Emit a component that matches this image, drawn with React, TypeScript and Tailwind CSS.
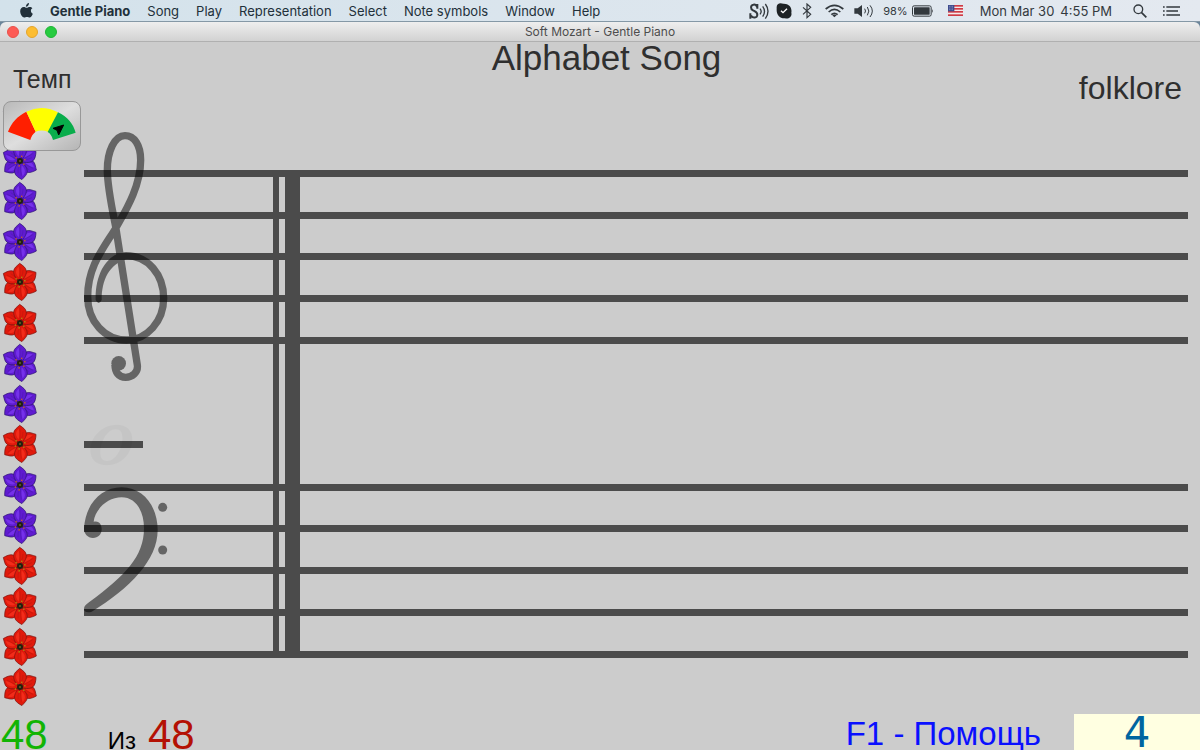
import type { ReactNode } from "react";

const menus = ["Song", "Play", "Representation", "Select", "Note symbols", "Window", "Help"];

function AppleIcon() {
  return (
    <svg viewBox="0 0 24 28" className="h-[15px] w-[13px]" fill="currentColor" aria-hidden="true">
      <path d="M16.6 0c.2 2-.6 3.700-1.700 5-1.100 1.200-2.600 2-4 1.900-.2-1.900.7-3.600 1.700-4.800C13.700.9 15.300.1 16.600 0z" />
      <path d="M23 9.800c-1.800 1.100-2.800 2.700-2.800 4.800 0 2.500 1.400 4.400 3.600 5.300-.7 2.400-2.900 6.800-5.500 7.300-1.800.2-2.900-1.200-5.300-1.200s-3.600 1.200-5.300 1.200C4.200 27.200.2 20.800.2 15.600c0-5 3-8 6.700-8 2.200 0 4 1.400 5.400 1.400 1.300 0 3.300-1.500 5.900-1.400 2 0 3.700.8 4.800 2.200z" />
    </svg>
  );
}

function SpeechIcon() {
  return (
    <svg viewBox="0 0 63 54" className="h-[18px] w-[21px]" fill="none" stroke="currentColor" aria-hidden="true">
      <path d="M25 20V6M25 16C22 9 17 7 13 8C4 10 4 21 12 25C19 29 26 31 25 39C24 48 12 50 6 41M4 34v16" strokeWidth="6" />
      <path d="M33 20q7 9 0 17M41 13q11 15 0 31M49 6q16 21 0 44" strokeWidth="4" />
    </svg>
  );
}

function SkypeIcon() {
  return (
    <svg viewBox="0 0 48 48" className="size-4" aria-hidden="true">
      <path d="M14 1C7 1 1 7 2 14c0 2 0 3 0 5-1 16 9 28 25 27 12 3 22-5 19-17C49 13 38 1 22 2c-3 0-5-1-8-1z" fill="#1d2225" />
      <path d="M15 23l6 6 12-12" fill="none" stroke="#fff" strokeWidth="4" />
    </svg>
  );
}

function BluetoothIcon() {
  return (
    <svg viewBox="0 0 30 48" className="h-4 w-[10px]" fill="none" stroke="currentColor" strokeWidth="3.500" aria-hidden="true">
      <path d="M3 13l23 21-11 10V3l11 10L3 34" />
    </svg>
  );
}

function WifiIcon() {
  return (
    <svg viewBox="0 0 57 42" className="h-[14px] w-[19px]" fill="none" stroke="currentColor" strokeWidth="5" aria-hidden="true">
      <path d="M2 15Q28-7 55 15M11 24Q28 8 46 24M19 32Q28 24 38 32" />
      <path d="M28 40l-6-6q6-5 13 0z" fill="currentColor" stroke="none" />
    </svg>
  );
}

function VolumeIcon() {
  return (
    <svg viewBox="0 0 60 42" className="h-[14px] w-5" fill="none" stroke="currentColor" strokeWidth="3" aria-hidden="true">
      <path d="M1 13h10L24 3v36L11 29H1z" fill="currentColor" stroke="none" />
      <path d="M32 14q5 7 0 14M40 9q9 12 0 25M48 4q14 17 0 35" />
    </svg>
  );
}

function BatteryIcon() {
  return (
    <svg viewBox="0 0 66 36" className="h-3 w-[22px]" aria-hidden="true">
      <rect x="1.500" y="2.500" width="56" height="31" rx="5" fill="none" stroke="currentColor" strokeWidth="3" />
      <rect x="6" y="7" width="47" height="22" rx="1" fill="currentColor" />
      <path d="M60 12q5 6 0 12z" fill="currentColor" />
    </svg>
  );
}

function FlagIcon() {
  return (
    <svg viewBox="0 0 45 33" className="h-[11px] w-[15px]" role="img" aria-label="U.S. keyboard">
      <rect width="45" height="33" fill="#f4e9ea" />
      {[0, 9, 18, 28].map((y) => (
        <rect key={y} y={y} width="45" height="5" fill="#cf3b45" />
      ))}
      <rect width="19" height="19" fill="#3d4b8e" />
      {[4, 9, 14].map((y) => (
        <path key={y} d={`M3 ${y}h14`} stroke="#c5cae6" strokeWidth="2" strokeDasharray="2 3" />
      ))}
    </svg>
  );
}

function SearchIcon() {
  return (
    <svg viewBox="0 0 42 42" className="size-[14px]" fill="none" stroke="currentColor" aria-hidden="true">
      <circle cx="16" cy="16" r="13" strokeWidth="4" />
      <path d="M25 25l15 15" strokeWidth="5" />
    </svg>
  );
}

function ListIcon() {
  return (
    <svg viewBox="0 0 51 30" className="h-[10px] w-[17px]" stroke="currentColor" strokeWidth="5" aria-hidden="true">
      <path d="M0 3h5M10 3h41M0 15h5M10 15h35M0 27h5M10 27h41" />
    </svg>
  );
}

function StatusButton({ label, className, children }: { label: string; className: string; children: ReactNode }) {
  return (
    <button type="button" aria-label={label} className={`flex shrink-0 items-center ${className}`}>
      {children}
    </button>
  );
}

function MenuBar() {
  return (
    <nav className="flex h-[21px] items-center justify-between bg-linear-to-r from-[#d3e2eb] to-[#e4e9f0] px-5 text-[13px] leading-5 whitespace-nowrap text-[#22303a]">
      <div className="flex items-center gap-[17px]">
        <button type="button" aria-label="Apple menu">
          <AppleIcon />
        </button>
        <button type="button" className="font-bold">
          Gentle Piano
        </button>
        {menus.map((menu) => (
          <button type="button" key={menu}>
            {menu}
          </button>
        ))}
      </div>
      <div className="flex items-center text-[#33393e]">
        <StatusButton label="Speech" className="mr-[6px]"><SpeechIcon /></StatusButton>
        <StatusButton label="Skype" className="mr-[10px]"><SkypeIcon /></StatusButton>
        <StatusButton label="Bluetooth" className="mr-[13px]"><BluetoothIcon /></StatusButton>
        <StatusButton label="Wi-Fi" className="mr-[10px]"><WifiIcon /></StatusButton>
        <StatusButton label="Volume" className="mr-[9px]"><VolumeIcon /></StatusButton>
        <StatusButton label="Battery 98%" className="mr-[14px] gap-1 text-[11px]">
          98%
          <BatteryIcon />
        </StatusButton>
        <StatusButton label="Input source" className="mr-[17px]"><FlagIcon /></StatusButton>
        <StatusButton label="Date and time" className="mr-[21px] gap-[6px]">
          <span>Mon Mar 30</span>
          <span>4:55 PM</span>
        </StatusButton>
        <StatusButton label="Search" className="mr-4"><SearchIcon /></StatusButton>
        <StatusButton label="Notification Center" className=""><ListIcon /></StatusButton>
      </div>
    </nav>
  );
}

function TitleBar() {
  return (
    <div className="border-t border-[#8598a6] bg-[#6b8499]">
      <div className="grid h-5 grid-cols-[1fr_auto_1fr] items-center rounded-t-md border-b border-[#b0b0b0] bg-linear-to-b from-[#eeeeee] to-[#d2d2d2] px-[7px]">
        <div className="flex gap-[7px]">
          <button type="button" aria-label="Close" className="size-3 rounded-full border border-[#e9514a] bg-[#fd5b55]" />
          <button type="button" aria-label="Minimize" className="size-3 rounded-full border border-[#e5a52b] bg-[#fdbd31]" />
          <button type="button" aria-label="Zoom" className="size-3 rounded-full border border-[#1fb535] bg-[#27cb40]" />
        </div>
        <span className="text-[12px] leading-4 text-[#4d4d4d]">Soft Mozart - Gentle Piano</span>
      </div>
    </div>
  );
}

const petals = [120, 236, 60, 298, 175, 0];

function Flower({ tone }: { tone: "violet" | "red" }) {
  const violet = tone === "violet";
  const fill = violet ? "#5f1bd0" : "#e0190b";
  const light = violet ? "#7531ea" : "#f22c1a";
  const dark = violet ? "#2e1670" : "#7a1410";
  return (
    <svg viewBox="-60 -60 120 120" className="size-10" aria-hidden="true">
      {petals.map((angle) => (
        <g key={angle} transform={`rotate(${angle})`}>
          <path d="M0 0C-10-8-20-20-19-33C-18-43-9-48-1-56C8-50 18-43 19-33C20-20 10-8 0 0z" fill={fill} stroke={dark} strokeWidth="2" />
          <path d="M-4-14C-15-25-14-38-4-46C-1-36-1-24-4-14z" fill={light} />
          <path d="M0-8V-44M2-12Q10-24 9-36" fill="none" stroke={dark} strokeWidth="1.500" opacity=".4" />
        </g>
      ))}
      {[20, 75, 130, 190, 245, 310].map((angle) => (
        <g key={angle} transform={`rotate(${angle})`}>
          <path d="M0 0V-13" stroke={dark} strokeWidth="2" />
          <circle cy="-15" r="2.500" fill={violet ? "#c8602c" : "#b08a0e"} />
        </g>
      ))}
      <circle r="9" fill="#211f10" />
      <circle r="3" fill="#6d6a20" />
    </svg>
  );
}

const flowers: ("violet" | "red")[] = [
  "violet", "violet", "violet", "violet", "red", "red", "violet", "violet",
  "red", "violet", "violet", "red", "red", "red", "red",
];

function TempoGauge() {
  return (
    <svg viewBox="13 126 228 144" className="h-full w-full" aria-hidden="true">
      <path d="M25 215C35 188 54 168 80 155L108 215Q96 224 92 240z" fill="#ff1f00" />
      <path d="M80 155Q127 132 175 157L146 216Q127 208 108 215z" fill="#ffff00" />
      <path d="M175 157C203 170 221 192 228 218L160 240Q156 223 144 216z" fill="#09ad4c" />
      <path d="M192 195l-32 10 12 6 5 14z" fill="#000" stroke="#000" strokeWidth="3" />
    </svg>
  );
}

/* Offsets of the staff lines from the top of the score. */
const staffLines = [70, 112, 153, 195, 237, 384, 425, 467, 509, 551];

function Score() {
  return (
    <svg className="h-[607px] w-full" role="img" aria-label="Grand staff with treble and bass clefs">
      <g fill="#4b4b4b">
        {staffLines.map((y) => (
          <rect key={y} y={y} width="100%" height="7" />
        ))}
        <rect y="341" width="59" height="7" />
        <rect x="189" y="70" width="6" height="488" />
        <rect x="201" y="70" width="15" height="488" />
      </g>
      <svg x="-9" y="20" width="240" height="270" viewBox="0 0 720 810">
        <g opacity=".5">
          <path
            d="M152 407C220 407 266 465 266 535C266 605 215 660 155 660C90 660 38 605 38 530C38 440 85 385 122 325C150 275 197 200 197 120C197 75 178 47 150 47C118 47 97 95 97 150C97 200 112 270 122 320L187 735C190 757 172 772 152 772C130 772 120 755 120 735"
            fill="none"
            stroke="#000"
            strokeWidth="22"
          />
          <path d="M155 396C105 396 60 450 62 540Q71 558 80 540C80 480 103 432 155 418z" />
          <circle cx="131" cy="730" r="22" />
        </g>
      </svg>
      <svg x="-9" y="310" width="240" height="260" viewBox="0 0 720 780">
        <g opacity=".5">
          <path d="M27 355C32 280 80 232 140 232C205 232 248 290 248 360C248 450 165 535 50 605C38 609 27 606 27 597C27 589 32 584 42 577C150 498 207 440 207 355C207 300 180 262 140 262C98 262 60 298 56 335C74 331 80 345 80 358C80 373 69 384 54 384C38 384 27 372 27 355z" />
          <circle cx="263" cy="292" r="13.500" />
          <circle cx="263" cy="420" r="13.500" />
        </g>
        <path
          d="M46 120C46 80 82 44 125 44C155 44 172 60 172 88C172 130 140 166 96 166C65 166 46 150 46 120zM76 130C76 145 84 153 96 153C120 153 142 120 142 84C142 68 136 58 122 58C97 58 76 95 76 130z"
          fillRule="evenodd"
          opacity=".03"
        />
      </svg>
    </svg>
  );
}

export default function App() {
  return (
    <div className="flex min-h-screen flex-col overflow-hidden bg-[#cccccc] font-['Inter','Noto_Sans',sans-serif]">
      <MenuBar />
      <TitleBar />
      <main className="flex flex-1 flex-col font-['Liberation_Sans',Arial,sans-serif] text-[#2f2f2f]">
        <header className="grid h-[58px] grid-cols-[1fr_auto_1fr] items-start pl-[13px]">
          <label htmlFor="tempo" className="pt-[21px] text-[25px] leading-8">
            Темп
          </label>
          <h1 className="text-[35px] leading-8">Alphabet Song</h1>
          <p className="pt-7 pr-[18px] text-right text-[32px] leading-9">folklore</p>
        </header>
        <div className="flex flex-1">
          <div className="relative flex h-[607px] w-[84px] shrink-0 flex-col justify-between">
            {flowers.map((tone, i) => (
              <Flower key={i} tone={tone} />
            ))}
            <button
              id="tempo"
              type="button"
              className="absolute top-px left-[3px] h-[50px] w-[78px] rounded-lg border border-[#989898] bg-linear-to-br from-[#b9b9b9] via-[#dedede] to-[#b5b5b5]"
            >
              <TempoGauge />
            </button>
          </div>
          <div className="min-w-0 flex-1 pr-3">
            <Score />
          </div>
        </div>
        <footer className="flex h-9 items-start justify-between">
          <div className="flex items-baseline pl-px text-[42px] leading-[42px]">
            <span className="text-[#11b404]">48</span>
            <span className="ml-[60px] text-[24px] text-black">Из</span>
            <span className="ml-3 text-[#b41104]">48</span>
          </div>
          <div className="flex items-start">
            <button type="button" className="mr-[33px] text-[33px] leading-10 text-[#0a10ff]">
              F1 - Помощь
            </button>
            <output className="h-9 w-[126px] bg-[#ffffe1] text-center font-['DejaVu_Sans',sans-serif] text-[42px] leading-[38px] text-[#0065a0]">
              4
            </output>
          </div>
        </footer>
      </main>
    </div>
  );
}
